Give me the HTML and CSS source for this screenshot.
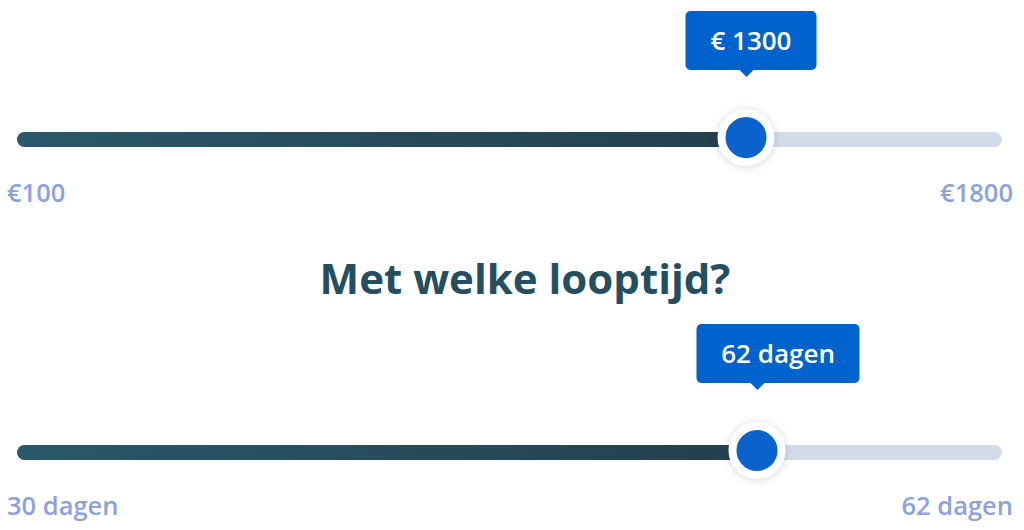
FILE: index.html
```html
<!DOCTYPE html>
<html lang="nl">
<head>
<meta charset="utf-8">
<link rel="stylesheet" href="styles.css">
</head>
<body>
<div class="page">
  <div class="slider first">
    <div class="track">
      <div class="fill" style="width:74%"></div>
      <div class="thumb" style="left:74%">
        <div class="tip">€ 1300</div>
      </div>
    </div>
    <div class="labels"><span>€100</span><span>€1800</span></div>
  </div>
  <h2 class="title">Met welke looptijd?</h2>
  <div class="slider second">
    <div class="track">
      <div class="fill" style="width:75.1%"></div>
      <div class="thumb" style="left:75.1%">
        <div class="tip">62 dagen</div>
      </div>
    </div>
    <div class="labels"><span>30 dagen</span><span>62 dagen</span></div>
  </div>
</div>
</body>
</html>
```
FILE: styles.css
```css
html, body {
  margin: 0;
  padding: 0;
  background: #ffffff;
  font-family: "Open Sans", "DejaVu Sans", sans-serif;
  overflow: hidden;
}
.page {
  width: 1024px;
  height: 530px;
  box-sizing: border-box;
  padding: 0 11px 0 7px;
  display: flex;
  flex-direction: column;
}
.slider.first { padding-top: 132px; }
.slider.second { margin-top: 139px; }
.track {
  position: relative;
  height: 15px;
  margin: 0 11px 0 10px;
  border-radius: 8px;
  background: #d3dcea;
}
.fill {
  height: 100%;
  border-radius: 8px 0 0 8px;
  background: linear-gradient(90deg, #2a5868 0%, #27495a 60%, #233f4d 100%);
}
.thumb {
  position: absolute;
  top: 50%;
  width: 41px;
  height: 41px;
  border-radius: 50%;
  background: #0a62cc;
  border: 8.5px solid #ffffff;
  transform: translate(-50%, -50%) translateY(-2.5px);
  box-shadow: 0 1px 8px rgba(40, 60, 90, 0.2);
}
.tip {
  position: absolute;
  left: -40px;
  bottom: calc(100% + 47px);
  background: #0062cc;
  color: #ffffff;
  font-size: 26px;
  font-weight: 600;
  line-height: 59px;
  height: 59px;
  padding: 0 25px;
  border-radius: 5px;
  white-space: nowrap;
}
.tip::after {
  content: "";
  position: absolute;
  left: 54px;
  top: 100%;
  border-left: 7px solid transparent;
  border-right: 7px solid transparent;
  border-top: 7px solid #0062cc;
}
.labels {
  display: flex;
  justify-content: space-between;
  margin-top: 28px;
  font-size: 25.5px;
  font-weight: 600;
  color: #8da2dc;
}
.second .labels { margin-top: 28px; }
.title {
  margin: 40px 0 0;
  text-align: center;
  font-size: 42px;
  font-weight: 700;
  color: #254e5f;
  padding-left: 30px;
}
```
